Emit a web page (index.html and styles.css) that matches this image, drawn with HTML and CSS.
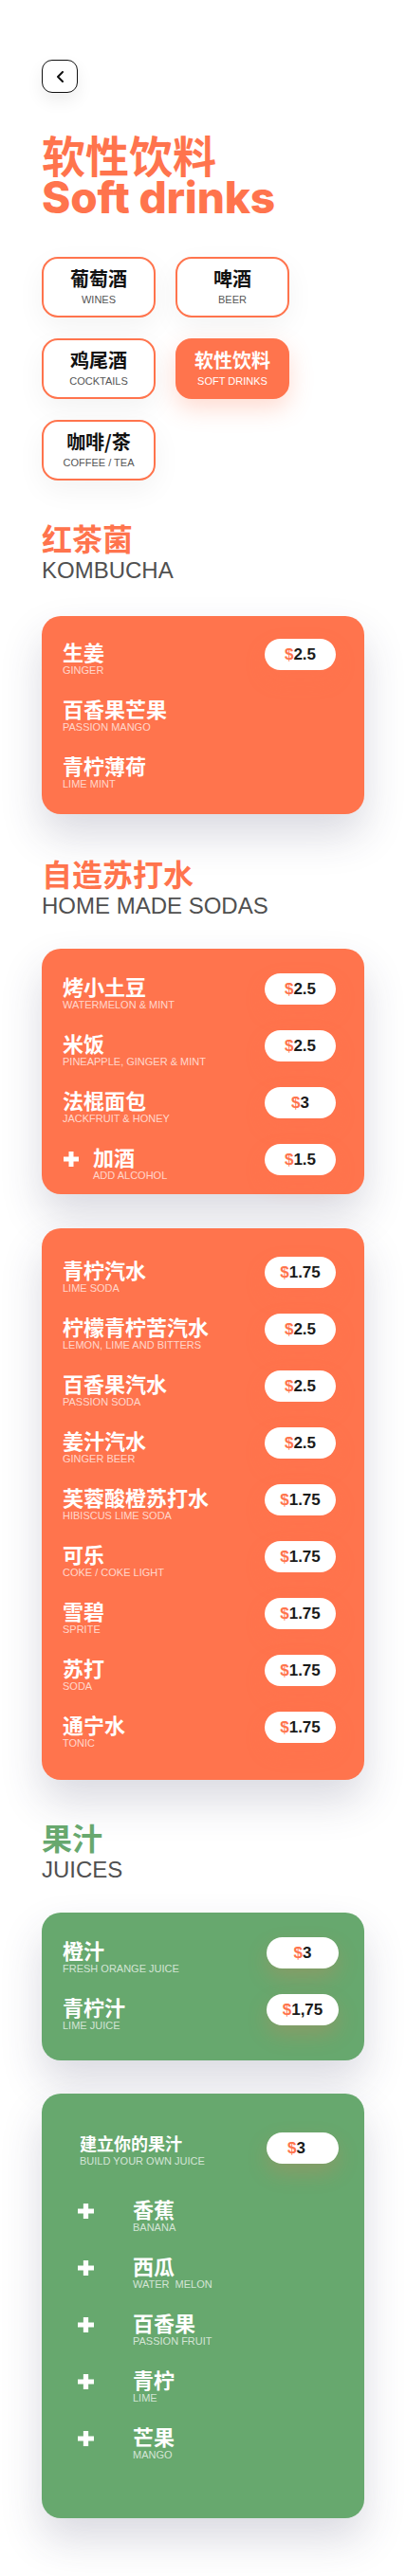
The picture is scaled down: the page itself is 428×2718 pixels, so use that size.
FILE: index.html
```html
<!DOCTYPE html>
<html lang="zh">
<head>
<meta charset="utf-8">
<title>Soft drinks</title>
<link rel="stylesheet" href="styles.css">
</head>
<body>
<div class="page">
  <button class="back" aria-label="back">
    <svg width="9" height="12" viewBox="0 0 9 12"><path d="M7 1 L2 6 L7 11" fill="none" stroke="#111" stroke-width="2" stroke-linecap="round" stroke-linejoin="round"/></svg>
  </button>

  <h1 class="title">
    <span class="title-cn">软性饮料</span>
    <span class="title-en">Soft drinks</span>
  </h1>

  <nav class="cats">
    <a class="cat"><span class="cat-cn">葡萄酒</span><span class="cat-en">WINES</span></a>
    <a class="cat"><span class="cat-cn">啤酒</span><span class="cat-en">BEER</span></a>
    <a class="cat"><span class="cat-cn">鸡尾酒</span><span class="cat-en">COCKTAILS</span></a>
    <a class="cat active"><span class="cat-cn">软性饮料</span><span class="cat-en">SOFT DRINKS</span></a>
    <a class="cat"><span class="cat-cn">咖啡/茶</span><span class="cat-en">COFFEE / TEA</span></a>
  </nav>

  <section class="sec sec-kombucha">
    <h2 class="sec-head"><span class="sec-cn">红茶菌</span><span class="sec-en">KOMBUCHA</span></h2>
    <div class="card card-kombucha">
      <div class="item">
        <div class="name"><div class="cn">生姜</div><div class="en">GINGER</div></div>
        <div class="price"><span class="cur">$</span>2.5</div>
      </div>
      <div class="item">
        <div class="name"><div class="cn">百香果芒果</div><div class="en">PASSION MANGO</div></div>
      </div>
      <div class="item">
        <div class="name"><div class="cn">青柠薄荷</div><div class="en">LIME MINT</div></div>
      </div>
    </div>
  </section>

  <section class="sec sec-sodas">
    <h2 class="sec-head"><span class="sec-cn">自造苏打水</span><span class="sec-en">HOME MADE SODAS</span></h2>
    <div class="card card-home">
      <div class="item">
        <div class="name"><div class="cn">烤小土豆</div><div class="en">WATERMELON &amp; MINT</div></div>
        <div class="price"><span class="cur">$</span>2.5</div>
      </div>
      <div class="item">
        <div class="name"><div class="cn">米饭</div><div class="en">PINEAPPLE, GINGER &amp; MINT</div></div>
        <div class="price"><span class="cur">$</span>2.5</div>
      </div>
      <div class="item">
        <div class="name"><div class="cn">法棍面包</div><div class="en">JACKFRUIT &amp; HONEY</div></div>
        <div class="price"><span class="cur">$</span>3</div>
      </div>
      <div class="item">
        <div class="name addon">
          <svg class="plus" width="16" height="16" viewBox="0 0 16 16"><path d="M5.5 0h5v5.5H16v5h-5.5V16h-5v-5.5H0v-5h5.5z" fill="#fff"/></svg>
          <div><div class="cn">加酒</div><div class="en">ADD ALCOHOL</div></div>
        </div>
        <div class="price"><span class="cur">$</span>1.5</div>
      </div>
    </div>

    <div class="card card-soda">
      <div class="item">
        <div class="name"><div class="cn">青柠汽水</div><div class="en">LIME SODA</div></div>
        <div class="price"><span class="cur">$</span>1.75</div>
      </div>
      <div class="item">
        <div class="name"><div class="cn">柠檬青柠苦汽水</div><div class="en">LEMON, LIME AND BITTERS</div></div>
        <div class="price"><span class="cur">$</span>2.5</div>
      </div>
      <div class="item">
        <div class="name"><div class="cn">百香果汽水</div><div class="en">PASSION SODA</div></div>
        <div class="price"><span class="cur">$</span>2.5</div>
      </div>
      <div class="item">
        <div class="name"><div class="cn">姜汁汽水</div><div class="en">GINGER BEER</div></div>
        <div class="price"><span class="cur">$</span>2.5</div>
      </div>
      <div class="item">
        <div class="name"><div class="cn">芙蓉酸橙苏打水</div><div class="en">HIBISCUS LIME SODA</div></div>
        <div class="price"><span class="cur">$</span>1.75</div>
      </div>
      <div class="item">
        <div class="name"><div class="cn">可乐</div><div class="en">COKE / COKE LIGHT</div></div>
        <div class="price"><span class="cur">$</span>1.75</div>
      </div>
      <div class="item">
        <div class="name"><div class="cn">雪碧</div><div class="en">SPRITE</div></div>
        <div class="price"><span class="cur">$</span>1.75</div>
      </div>
      <div class="item">
        <div class="name"><div class="cn">苏打</div><div class="en">SODA</div></div>
        <div class="price"><span class="cur">$</span>1.75</div>
      </div>
      <div class="item">
        <div class="name"><div class="cn">通宁水</div><div class="en">TONIC</div></div>
        <div class="price"><span class="cur">$</span>1.75</div>
      </div>
    </div>
  </section>

  <section class="sec sec-juices">
    <h2 class="sec-head green-head"><span class="sec-cn">果汁</span><span class="sec-en">JUICES</span></h2>
    <div class="card green card-juice">
      <div class="item">
        <div class="name"><div class="cn">橙汁</div><div class="en">FRESH ORANGE JUICE</div></div>
        <div class="price"><span class="cur">$</span>3</div>
      </div>
      <div class="item">
        <div class="name"><div class="cn">青柠汁</div><div class="en">LIME JUICE</div></div>
        <div class="price"><span class="cur">$</span>1,75</div>
      </div>
    </div>

    <div class="card green build">
      <div class="item build-head">
        <div class="name"><div class="cn small">建立你的果汁</div><div class="en">BUILD YOUR OWN JUICE</div></div>
        <div class="price left"><span class="cur">$</span>3</div>
      </div>
      <ul class="fruits">
        <li class="fruit"><svg class="plus" width="17" height="16" viewBox="0 0 16 16" preserveAspectRatio="none"><path d="M5.5 0h5v5.5H16v5h-5.5V16h-5v-5.5H0v-5h5.5z" fill="#fff"/></svg><div><div class="cn">香蕉</div><div class="en">BANANA</div></div></li>
        <li class="fruit"><svg class="plus" width="17" height="16" viewBox="0 0 16 16" preserveAspectRatio="none"><path d="M5.5 0h5v5.5H16v5h-5.5V16h-5v-5.5H0v-5h5.5z" fill="#fff"/></svg><div><div class="cn">西瓜</div><div class="en">WATER&nbsp; MELON</div></div></li>
        <li class="fruit"><svg class="plus" width="17" height="16" viewBox="0 0 16 16" preserveAspectRatio="none"><path d="M5.5 0h5v5.5H16v5h-5.5V16h-5v-5.5H0v-5h5.5z" fill="#fff"/></svg><div><div class="cn">百香果</div><div class="en">PASSION FRUIT</div></div></li>
        <li class="fruit"><svg class="plus" width="17" height="16" viewBox="0 0 16 16" preserveAspectRatio="none"><path d="M5.5 0h5v5.5H16v5h-5.5V16h-5v-5.5H0v-5h5.5z" fill="#fff"/></svg><div><div class="cn">青柠</div><div class="en">LIME</div></div></li>
        <li class="fruit"><svg class="plus" width="17" height="16" viewBox="0 0 16 16" preserveAspectRatio="none"><path d="M5.5 0h5v5.5H16v5h-5.5V16h-5v-5.5H0v-5h5.5z" fill="#fff"/></svg><div><div class="cn">芒果</div><div class="en">MANGO</div></div></li>
      </ul>
    </div>
  </section>
</div>
</body>
</html>
```

FILE: styles.css
```css
* { box-sizing: border-box; }
html, body { margin: 0; padding: 0; background: #fff; }
body {
  font-family: "Liberation Sans", "Noto Sans CJK SC", sans-serif;
  color: #1a1a1a;
}
.page {
  width: 428px;
  padding: 63px 0 63px 44px;
}
.back {
  display: flex;
  align-items: center;
  justify-content: center;
  width: 38px;
  height: 35px;
  padding: 0;
  border: 1px solid #111;
  border-radius: 11px;
  background: #fff;
  box-shadow: 0 8px 18px rgba(0, 0, 0, 0.07);
}
.title {
  margin: 41px 0 0;
  display: flex;
  flex-direction: column;
  color: #ff744d;
}
.title-cn {
  font-family: "Noto Sans CJK SC", sans-serif;
  font-weight: 700;
  font-size: 46px;
  line-height: 46px;
}
.title-en {
  font-family: Inter, "Liberation Sans", sans-serif;
  font-weight: 800;
  font-size: 46px;
  line-height: 46px;
  letter-spacing: -0.2px;
}
.cats {
  margin-top: 40px;
  display: grid;
  grid-template-columns: 120px 120px;
  column-gap: 21px;
  row-gap: 22px;
}
.cat {
  height: 64px;
  border: 2px solid #ff744d;
  border-radius: 17px;
  background: #fff;
  display: flex;
  flex-direction: column;
  align-items: center;
  justify-content: center;
  gap: 5px;
  box-shadow: 0 10px 30px rgba(0, 0, 0, 0.05);
}
.cat-cn {
  font-family: "Noto Sans CJK SC", sans-serif;
  font-weight: 700;
  font-size: 20px;
  line-height: 22px;
  color: #111;
}
.cat-en {
  font-size: 11px;
  line-height: 13px;
  color: #555;
}
.cat.active {
  background: #ff744d;
  box-shadow: 0 10px 24px rgba(255, 116, 77, 0.25);
}
.cat.active .cat-cn, .cat.active .cat-en { color: #fff; }

.sec-head {
  margin: 42px 0 0;
  display: flex;
  flex-direction: column;
  font-weight: 400;
}
.sec-sodas .sec-head { margin-top: 44px; }
.sec-cn {
  font-family: "Noto Sans CJK SC", sans-serif;
  font-weight: 700;
  font-size: 32px;
  line-height: 36px;
  color: #ff744d;
}
.sec-en {
  margin-top: 3px;
  font-size: 24px;
  line-height: 28px;
  color: #505050;
}
.green-head .sec-cn { color: #67a86e; }

.card {
  margin-top: 31px;
  width: 340px;
  border-radius: 20px;
  background: #ff744d;
  padding: 26px 30px 30px 22px;
  display: flex;
  flex-direction: column;
  gap: 20px;
  box-shadow: 0 22px 44px rgba(50, 50, 90, 0.18);
}
.card + .card { margin-top: 36px; }
.card-kombucha { margin-top: 34px; padding-top: 24px; padding-bottom: 25px; }
.card-home { padding-top: 26px; padding-bottom: 13px; }
.card-soda { padding-top: 30px; padding-bottom: 32px; }
.card-juice { padding-top: 26px; padding-bottom: 30px; }
.card.green {
  background: #67a86e;
  padding-right: 27px;
}
.item {
  display: flex;
  justify-content: space-between;
  align-items: flex-start;
}
.name { color: #fff; }
.cn {
  font-family: "Noto Sans CJK SC", sans-serif;
  font-weight: 700;
  font-size: 22px;
  line-height: 27px;
  color: #fff;
}
.en {
  font-size: 11px;
  line-height: 13px;
  color: rgba(255, 255, 255, 0.72);
}
.price {
  width: 75px;
  height: 33px;
  border-radius: 17px;
  background: #fff;
  display: flex;
  align-items: center;
  justify-content: center;
  font-weight: 700;
  font-size: 17px;
  color: #1a1a1a;
  box-shadow: 0 10px 22px rgba(255, 116, 77, 0.22);
}
.cur { color: #ff744d; }
.green .price { width: 76px; }
.price.left { justify-content: flex-start; padding-left: 22px; }

.addon {
  display: flex;
  align-items: flex-start;
  gap: 15px;
}
.addon .plus { margin: 8px 0 0 1px; }

.card.build { margin-top: 35px; padding: 41px 27px 60px 40px; gap: 0; }
.build .cn.small { font-size: 18px; line-height: 22px; }
.build-head .en { margin-top: 2px; }
.fruits {
  list-style: none;
  margin: 30px 0 0;
  padding: 0;
  display: flex;
  flex-direction: column;
  gap: 20px;
}
.fruit {
  display: flex;
  align-items: flex-start;
  gap: 41px;
}
.fruit .plus { margin: 8px 0 0 -2px; }
```
